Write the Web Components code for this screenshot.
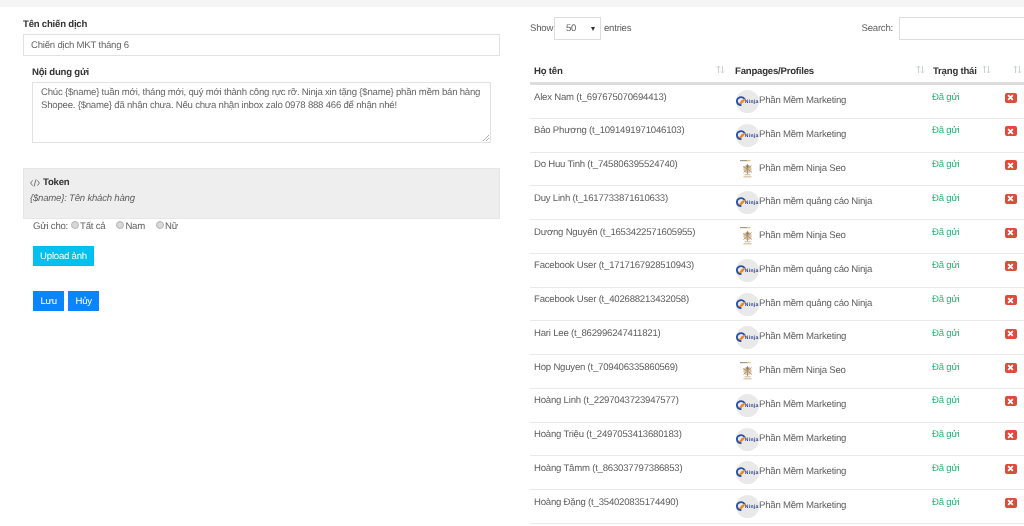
<!DOCTYPE html>
<html lang="vi"><head><meta charset="utf-8"><title>Chiến dịch</title>
<style>
html,body{margin:0;padding:0;height:526px;overflow:hidden;background:#fff}
body{font:9.6px "Liberation Sans",Arial,sans-serif;letter-spacing:-.22px;color:#606060;text-rendering:geometricPrecision}
</style></head><body>
<campaign-page></campaign-page>
<script>
const def=(n,html,init)=>customElements.define(n,class extends HTMLElement{
  connectedCallback(){ if(this.shadowRoot) return; const s=this.attachShadow({mode:'open'}); s.innerHTML=html; init&&init(this,s);} });

const ninjaLogo=`<svg width="23" height="23" viewBox="0 0 23 23"><circle cx="11.5" cy="11.5" r="11.5" fill="#e9e9e9"/>
<path d="M5.4 15a4.2 3.9 0 1 1 3.4-5.8" fill="none" stroke="#2a4fa8" stroke-width="1.8"/><path d="M3 13.4c2.6 1 4.4-1 5.9-4.2-1 .6-2.6.8-3.6 1.6" fill="#f0851e" stroke="#f0851e" stroke-width=".8"/>
<text x="8.8" y="13.4" font-family="Liberation Sans" font-size="5" font-weight="700" letter-spacing="0" fill="#2a3f8f" textLength="13.4">Ninja</text></svg>`;
const seoLogo=`<svg width="23" height="23" viewBox="0 0 23 23"><rect x="4" y="2" width="7" height="1.2" fill="#999"/><rect x="11" y="2" width="3.5" height="1.2" fill="#e6c468"/>
<circle cx="11.5" cy="11" r="4.2" fill="#dcc8a8"/><path d="M7 8.5l4.5 2.5 4-3.5M7.5 14.5l4-3.5 4.5 3.5M11.5 6v10" stroke="#ad9270" stroke-width=".9" fill="none"/><circle cx="11.5" cy="8.6" r="1.3" fill="#94785a"/><path d="M7.5 18.8h8" stroke="#d8c4a6" stroke-width="1.3"/><path d="M8.5 16.8h6" stroke="#c4ae90" stroke-width=".9"/></svg>`;

def('ui-field',`<style>:host{display:block}
b{display:block;color:#333;line-height:12px;padding-top:1px;margin-bottom:3px}
.box{display:block;box-sizing:border-box;border:1px solid #e2e2e6;color:#666}
</style><b></b><div class="box"><slot></slot></div>`,(h,s)=>{s.querySelector('b').textContent=h.getAttribute('label');});

def('ui-button',`<style>:host{display:inline-flex;align-items:center;justify-content:center;box-sizing:border-box;height:20px;padding:0 7.5px;color:#fff;background:var(--bg,#0a84ff)}</style><slot></slot>`);

def('ui-radio',`<style>:host{display:inline-flex;align-items:center}
i{border-radius:50%;background:#d8d8d8;border:1px solid #b4b4b4;width:6px;height:6px;margin:-3px 1px 0 0}</style><i></i><slot></slot>`);

def('token-panel',`<style>:host{display:block;box-sizing:border-box;height:51px;background:#eee;border:1px solid #e6e6ea;padding:8px 6px 0}
.t{display:flex;align-items:center;gap:3px;color:#333;font-weight:700;line-height:12px}
svg{display:block}
.n{font-style:italic;margin-top:4px;line-height:12px}</style>
<div class="t"><svg width="10" height="8" viewBox="0 0 10 8" fill="none" stroke="#555" stroke-width=".8"><path d="M2.6 1.4L.6 4l2 2.6M7.4 1.4l2 2.6-2 2.6M6 .4L4 7.6"/></svg><span>Token</span></div>
<div class="n">{$name}: Tên khách hàng</div>`);

def('campaign-form',`<style>
:host{display:block;width:477px;margin-left:23px;padding-top:11px}
.inp{height:20px;box-sizing:border-box;padding:1px 0 0 7px;display:flex;align-items:center;line-height:12px}
ui-field.a{margin-bottom:10px}
.sub{margin:0 9px 25px 9px}
.sub .area{box-sizing:border-box;height:59px;padding:3px 8px;line-height:13px;position:relative}
.rz{position:absolute;right:1px;bottom:1px}
.send{display:flex;align-items:center;box-sizing:border-box;margin:0 0 0 10px;height:14px;padding-top:1px;line-height:13px}
.send ui-radio{margin-left:3px}
.send ui-radio+ui-radio{margin-left:11px}
.up{margin:13px 0 0 10px;--bg:#00c0ef;width:61px;padding:0}
.acts{display:flex;gap:3.5px;margin:25px 0 0 10px}
</style>
<ui-field class="a" label="Tên chiến dịch"><div class="inp">Chiến dịch MKT tháng 6</div></ui-field>
<ui-field class="sub" label="Nội dung gửi"><div class="area">Chúc {$name} tuần mới, tháng mới, quý mới thành công rực rỡ. Ninja xin tặng {$name} phần mềm bán hàng Shopee. {$name} đã nhận chưa. Nếu chưa nhận inbox zalo 0978 888 466 để nhận nhé!<svg class="rz" width="6" height="6" viewBox="0 0 6 6" stroke="#888" stroke-width=".7"><path d="M0 6L6 0M3 6L6 3"/></svg></div></ui-field>
<token-panel></token-panel>
<div class="send">Gửi cho:<ui-radio>Tất cả</ui-radio><ui-radio>Nam</ui-radio><ui-radio>Nữ</ui-radio></div>
<div style="display:flex"><ui-button class="up">Upload ảnh</ui-button></div>
<div class="acts"><ui-button>Lưu</ui-button><ui-button>Hủy</ui-button></div>`);

const sortIcon=`<svg width="9" height="9" viewBox="0 0 9 9" fill="none" stroke-width="1"><path d="M2.5 8V1M1 2.6L2.5 1 4 2.6" stroke="var(--up,#c8d0d0)"/><path d="M6.5 1v7M5 6.4L6.5 8 8 6.4" stroke="#ccd2d2"/></svg>`;

def('table-head',`<style>
:host{display:grid;grid-template-columns:202px 197px 69px 50px;height:29px;border-bottom:3px solid #ddd;box-sizing:content-box;font-weight:700;color:#333}
div{display:flex;align-items:center;justify-content:space-between;padding:9px 7px 0 4px;box-sizing:border-box;line-height:12px}
svg{margin-top:-5px}
div:nth-child(1){--up:#8a9a9a}
div:nth-child(3){padding-right:4px;padding-left:3px}
</style>
<div>Họ tên ${sortIcon}</div><div>Fanpages/Profiles ${sortIcon}</div><div>Trạng thái ${sortIcon}</div><div style="padding-left:15px;justify-content:flex-start">${sortIcon}</div>`);

def('table-row',`<style>
:host{display:grid;grid-template-columns:202px 197px 72px 47px;height:33.75px;box-sizing:border-box;border-bottom:1px solid #e9e9e9}
.c{padding:0 4px;line-height:12px}
.n{padding-top:6.5px}
.p{display:flex;align-items:center;height:33px}
.p svg{flex:none}
.p span{margin-top:-1px}
.st{color:#26b574;padding:6.5px 3px 0}
.x{width:12.5px;height:10px;margin:7.5px 0 0 3.5px;background:#dd4b39;border-radius:2px;display:flex;align-items:center;justify-content:center}
</style><div class="c n"></div><div class="c p"></div><div class="c st">Đã gửi</div>
<div><div class="x"><svg width="7" height="7" viewBox="0 0 6 6"><path d="M1 1l4 4M5 1L1 5" stroke="#fff" stroke-width="1.6"/></svg></div></div>`,(h,s)=>{
  s.querySelector('.n').textContent=h.getAttribute('name');
  const p=s.querySelector('.p'); const seo=h.getAttribute('logo')==='seo';
  p.innerHTML=(seo?seoLogo:ninjaLogo)+`<span>${h.getAttribute('page')}</span>`;
});

const MM='Phần Mềm Marketing',QC='Phần mềm quảng cáo Ninja',SEO='Phần mềm Ninja Seo';
const rows=[['Alex Nam (t_697675070694413)',MM],['Bảo Phương (t_1091491971046103)',MM],['Do Huu Tinh (t_745806395524740)',SEO],['Duy Linh (t_1617733871610633)',QC],['Dương Nguyên (t_1653422571605955)',SEO],['Facebook User (t_1717167928510943)',QC],['Facebook User (t_402688213432058)',QC],['Hari Lee (t_862996247411821)',MM],['Hop Nguyen (t_709406335860569)',SEO],['Hoàng Linh (t_2297043723947577)',MM],['Hoàng Triệu (t_2497053413680183)',MM],['Hoàng Tâmm (t_863037797386853)',MM],['Hoàng Đặng (t_354020835174490)',MM]];

def('data-table',`<style>
:host{display:block;width:518px;padding-top:10px}
.top{display:flex;align-items:center;height:23px}
.show{width:24px;flex:none}
.sel{box-sizing:border-box;width:47px;height:23px;margin:0 3px 0 0;border:1px solid #ddd;display:flex;align-items:center;justify-content:space-between;padding:0 5px 0 11px}
.sel i{width:0;height:0;border:2.5px solid transparent;border-top:4px solid #333;border-bottom:0}
.s{margin-left:auto;margin-right:6px}
.q{box-sizing:border-box;width:149px;height:23px;border:1px solid #ddd;flex:none}
table-head{display:grid;margin-top:13px}
</style>
<div class="top"><span class="show">Show</span><div class="sel">50<i></i></div>entries<span class="s">Search:</span><div class="q"></div></div>
<table-head></table-head><div id="b"></div>`,(h,s)=>{
  const b=s.getElementById('b');
  for(const [n,p] of rows){const r=document.createElement('table-row');r.setAttribute('name',n);r.setAttribute('page',p);r.setAttribute('logo',p===SEO?'seo':'ninja');b.append(r);}
});

def('campaign-page',`<style>
:host{display:block;width:1024px;height:526px;overflow:hidden;border-top:7px solid #f5f5f5;box-sizing:border-box}
.g{display:flex;gap:30px;width:1100px;filter:blur(.35px)}
</style><div class="g"><campaign-form></campaign-form><data-table></data-table></div>`);
</script></body></html>
